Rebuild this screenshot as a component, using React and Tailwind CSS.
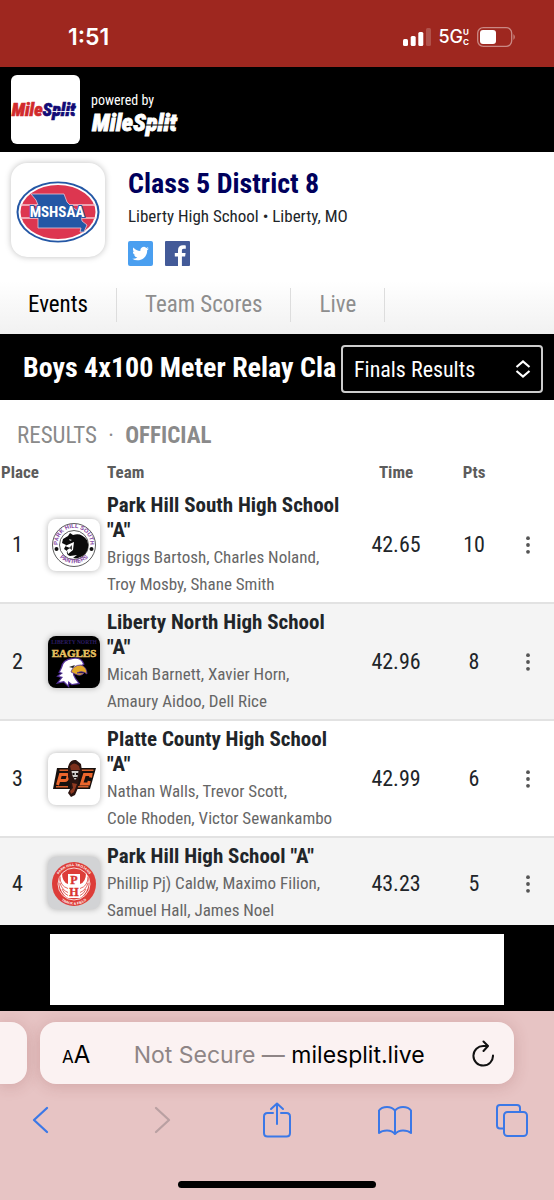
const ROWS = [
  {
    place: 1,
    team: 'Park Hill South High School "A"',
    runners: ['Briggs Bartosh, Charles Noland,', 'Troy Mosby, Shane Smith'],
    time: '42.65',
    pts: 10,
    Logo: PanthersLogo,
    tile: 'bg-white',
  },
  {
    place: 2,
    team: 'Liberty North High School "A"',
    runners: ['Micah Barnett, Xavier Horn,', 'Amaury Aidoo, Dell Rice'],
    time: '42.96',
    pts: 8,
    Logo: EaglesLogo,
    tile: 'bg-black',
  },
  {
    place: 3,
    team: 'Platte County High School "A"',
    runners: ['Nathan Walls, Trevor Scott,', 'Cole Rhoden, Victor Sewankambo'],
    time: '42.99',
    pts: 6,
    Logo: PiratesLogo,
    tile: 'bg-white',
  },
  {
    place: 4,
    team: 'Park Hill High School "A"',
    runners: ['Phillip Pj) Caldw, Maximo Filion,', 'Samuel Hall, James Noel'],
    time: '43.23',
    pts: 5,
    Logo: TrojansLogo,
    tile: 'bg-[#d2d3d5]',
  },
]

function PanthersLogo() {
  return (
    <svg viewBox="0 0 52 52" className="w-full h-full" aria-hidden="true">
      <defs>
        <path id="panther-top" d="M10.3 29 A16.2 16.2 0 1 1 41.7 29" />
        <path id="panther-bottom" d="M6.5 30 A20.5 20.5 0 0 0 45.5 30" />
      </defs>
      <circle cx="26" cy="26" r="21.5" fill="#fff" stroke="#333" strokeWidth="0.8" />
      <circle cx="26" cy="26" r="14.5" fill="none" stroke="#333" strokeWidth="0.8" />
      <g fill="#8040a0" fontSize="5.8" fontWeight="700" textAnchor="middle" fontFamily="Liberation Sans, sans-serif">
        <text>
          <textPath href="#panther-top" startOffset="50%">PARK HILL SOUTH</textPath>
        </text>
        <text>
          <textPath href="#panther-bottom" startOffset="50%">PANTHERS</textPath>
        </text>
      </g>
      <circle cx="8.5" cy="30" r="2" fill="#111" />
      <circle cx="43.5" cy="30" r="2" fill="#111" />
      <path
        d="M15 20 L20 17 L22 14 L25 16 Q33 13 39 21 Q42 29 37 35 Q32 40 25 39 L29 36 L22 37 Q18 36 19 32 L16 30 L18 26 L14 24 Z"
        fill="#0b0b0b"
      />
      <path d="M17 27 L26 23 L25 31 L20 35 L19 31 L22 29 Z" fill="#fff" />
      <path d="M21 29 L24 26 L24 31 Z" fill="#444" />
      <path d="M21 20 l3 1 -2 1 z" fill="#ccc" />
    </svg>
  )
}

function EaglesLogo() {
  return (
    <svg viewBox="0 0 52 52" className="w-full h-full" aria-hidden="true">
      <text x="26" y="8" fill="#2c1d63" fontSize="5.5" fontWeight="700" textAnchor="middle" fontFamily="Liberation Serif, serif">
        LIBERTY NORTH
      </text>
      <text
        x="26"
        y="21"
        fill="#e8c060"
        stroke="#e8c060"
        strokeWidth="0.5"
        fontSize="11"
        fontWeight="700"
        textAnchor="middle"
        fontFamily="Liberation Serif, serif"
      >
        EAGLES
      </text>
      <path
        d="M14 32 Q15 24 25 23 Q33 22 35 28 L30 31 L25 34 L25 39 L27 43 L30 47 L24 48 L20 45 L20 49 L16 45 L11 46 L15 41 L11 40 L15 37 L12 36 Z"
        fill="#fff"
        stroke="#53309a"
        strokeWidth="2.5"
        paintOrder="stroke"
      />
      <path d="M23 36 Q25 29 33 29 Q39 31 39 38 Q34 34 29 37 L36 37 Q33 41 27 38 Z" fill="#e3a929" stroke="#53309a" strokeWidth="0.8" />
      <path d="M21 31 L27 29 L25 32 Z" fill="#222" />
    </svg>
  )
}

function PiratesLogo() {
  return (
    <svg viewBox="0 0 52 52" className="w-full h-full" aria-hidden="true">
      <path d="M9 15 H48 L42 36 H5 Z" fill="#17100e" />
      <path d="M11.5 17.2 H20 M31 17.2 H45.5 M8 33.8 H20 M29 33.8 H40.5" stroke="#d65f2b" strokeWidth="1.4" />
      <g fill="none" stroke="#ec662c" strokeWidth="3">
        <path d="M9.5 32 L12.5 21.5 H19 Q20.5 21.5 20 23.5 L19.5 25.5 Q19 27.5 17 27.5 H11" />
        <path d="M42.5 24.5 L43 21.5 H36.5 L33.5 31 H40.5 L41.2 28" />
      </g>
      <path d="M20 14 Q22 6 28 7 L33 11 L34 18 L31 25 L30 35 L27 42 L23 44 L20 40 L23 34 L20 24 Z" fill="#2a1410" />
      <path d="M22 13 Q26 8 31 13 L32 17 L23 17 Z" fill="#7d301c" />
      <path d="M23.5 18 H30.5 L29.5 24 L27 27 L24.5 23 Z" fill="#d2cfcd" />
      <path d="M24.5 20 h2 v2 h-2 z M28 20 h2 v2 h-2 z M25.5 24 h3.5 v1 h-3.5 z" fill="#17100e" />
      <path d="M24 30 L29 31 L26 39 L23 41 L22 38 L25 35 Z" fill="#8f3920" />
    </svg>
  )
}

function TrojansLogo() {
  return (
    <svg viewBox="0 0 52 52" className="w-full h-full" aria-hidden="true">
      <defs>
        <path id="trojan-top" d="M8.5 30 A17.8 17.8 0 1 1 43.5 30" />
        <path id="trojan-bottom" d="M6 32 A20.6 20.6 0 0 0 46 32" />
      </defs>
      <circle cx="26" cy="27" r="22" fill="#dd3d39" />
      <circle cx="26" cy="27" r="16" fill="none" stroke="#fff" strokeWidth="0.8" />
      <g fill="#fff" fontSize="3.5" fontWeight="700" textAnchor="middle" fontFamily="Liberation Sans, sans-serif">
        <text>
          <textPath href="#trojan-top" startOffset="50%">PARK HILL TROJANS</textPath>
        </text>
        <text>
          <textPath href="#trojan-bottom" startOffset="50%">TRACK &amp; FIELD</textPath>
        </text>
      </g>
      <path
        d="M14 16 Q14 25 20 27 V17 H32 V27 Q38 25 38 16 Q43 25 39 33 Q37 38 32 41 H20 Q15 38 13 33 Q9 25 14 16 Z"
        fill="#fff"
      />
      <path
        d="M12 20 Q12 29 20 31.5 M12 26 Q14 33 20 35.5 M14 32 Q16 37 20 38.5 M40 20 Q40 29 32 31.5 M40 26 Q38 33 32 35.5 M38 32 Q36 37 32 38.5"
        fill="none"
        stroke="#dd3d39"
        strokeWidth="0.8"
      />
      <g
        fill="#d93330"
        stroke="#d93330"
        strokeWidth="0.4"
        fontSize="12"
        fontWeight="700"
        textAnchor="middle"
        fontFamily="Liberation Serif, serif"
      >
        <text x="26" y="27">P</text>
        <text x="26" y="39">H</text>
      </g>
    </svg>
  )
}

function MshsaaLogo() {
  return (
    <svg viewBox="0 0 94 94" className="w-full h-full" aria-label="MSHSAA">
      <ellipse cx="47" cy="49" rx="41.5" ry="30.5" fill="#2457a5" />
      <ellipse cx="47" cy="49" rx="39.5" ry="28.8" fill="#fff" />
      <ellipse cx="47" cy="49" rx="37.5" ry="27" fill="#dd3650" />
      <path d="M9.5 42 H84.5 M9.5 55 H84.5" stroke="#f3c6cf" strokeWidth="1.5" />
      <path
        d="M20 31 H53 L56 39 L61 44 L70 50 L71 58 L76 62 L73 69 L69 69 L70 65 H27 V42 L25 37 Z"
        fill="#2457a5"
        stroke="#e7c7d5"
        strokeWidth="0.8"
      />
      <text
        x="46"
        y="54"
        fill="#fff"
        stroke="#2457a5"
        strokeWidth="2"
        paintOrder="stroke"
        fontSize="15"
        fontWeight="700"
        textAnchor="middle"
        fontFamily="Liberation Sans Narrow, Roboto Condensed, sans-serif"
      >
        MSHSAA
      </text>
    </svg>
  )
}

// Wordmark with the thin cut that runs through "Split"
function MileSplitMark({ className, mile, split, cut }) {
  return (
    <svg viewBox="0 0 92 30" className={className} role="img" aria-label="MileSplit">
      <text
        x="1"
        y="22.5"
        fontSize="24"
        fontWeight="900"
        fontStyle="italic"
        strokeWidth="0.8"
        fontFamily="Roboto Condensed, Liberation Sans Narrow, sans-serif"
      >
        <tspan fill={mile} stroke={mile}>Mile</tspan>
        <tspan fill={split} stroke={split}>Split</tspan>
      </text>
      <path d="M54 17 H90" stroke={cut} strokeWidth="1.2" />
    </svg>
  )
}

function StatusBar() {
  return (
    <div className="flex items-center justify-between h-[67px] pt-[7px] pl-[68px] pr-[38px] bg-[#9e271f] text-white font-['Inter',sans-serif]">
      <span className="text-[23px] leading-7 font-semibold">1:51</span>
      <div className="flex items-center">
        <svg viewBox="0 0 28 18" className="w-7 h-[18px]" fill="#fff" aria-hidden="true">
          <rect x="0" y="11" width="5" height="7" rx="1.5" />
          <rect x="7.7" y="8" width="5" height="10" rx="1.5" />
          <rect x="15.3" y="4" width="5" height="14" rx="1.5" />
          <rect x="23" y="0" width="5" height="18" rx="1.5" opacity="0.2" />
        </svg>
        <span className="ml-[7px] text-lg leading-6 font-medium">5G</span>
        <span className="flex flex-col text-[8px] leading-[10px] font-bold">
          <span>U</span>
          <span>C</span>
        </span>
        <svg viewBox="0 0 39 20" className="w-[39px] h-5 ml-2" aria-hidden="true">
          <rect x="0.7" y="0.7" width="34" height="18.6" rx="5.5" fill="none" stroke="#fff" strokeOpacity="0.45" strokeWidth="1.3" />
          <rect x="3" y="3" width="16" height="14" rx="3" fill="#fff" />
          <path d="M36.5 7 q2.5 3 0 6 z" fill="#fff" fillOpacity="0.5" />
        </svg>
      </div>
    </div>
  )
}

function BrandBar() {
  return (
    <header className="flex items-center px-[11px] py-2 bg-black text-white">
      <div className="flex items-center justify-center w-[69px] h-[69px] rounded-md bg-white">
        <MileSplitMark className="w-[69px] h-6" mile="#d12a2c" split="#120b76" cut="#fff" />
      </div>
      <div className="ml-[11px] pt-2.5">
        <div className="text-sm leading-4">powered by</div>
        <MileSplitMark className="block w-[92px] h-[30px]" mile="#fff" split="#fff" cut="#000" />
      </div>
    </header>
  )
}

function MeetInfo() {
  return (
    <section className="flex px-[11px] pt-[11px] pb-[15px]">
      <div className="w-[94px] h-[94px] shrink-0 rounded-2xl bg-white shadow-[0_0_6px_rgba(0,0,0,0.25)]">
        <MshsaaLogo />
      </div>
      <div className="ml-[23px] pt-[3px]">
        <h1 className="text-[28px] leading-9 font-bold text-[#00005c]">Class 5 District 8</h1>
        <p className="text-[17px] leading-7 text-[#212529]">Liberty High School • Liberty, MO</p>
        <div className="flex gap-3 mt-[11px]">
          <a href="#twitter" aria-label="Twitter">
            <svg viewBox="0 0 25 25" className="w-[25px] h-[25px]">
              <rect width="25" height="25" rx="2" fill="#4a9ff0" />
              <path
                transform="translate(4.3 4.3) scale(0.69)"
                d="M23.95 4.57a10 10 0 0 1-2.82.77 4.96 4.96 0 0 0 2.16-2.72c-.95.55-2 .96-3.12 1.18a4.92 4.92 0 0 0-8.38 4.48C7.69 8.09 4.07 6.13 1.64 3.16a4.82 4.82 0 0 0-.67 2.48c0 1.71.87 3.21 2.19 4.1a4.9 4.9 0 0 1-2.23-.62v.06a4.92 4.92 0 0 0 3.95 4.83 5 5 0 0 1-2.21.08 4.94 4.94 0 0 0 4.6 3.42A9.87 9.87 0 0 1 0 19.54a13.99 13.99 0 0 0 7.56 2.21c9.05 0 14-7.5 14-13.99 0-.21 0-.42-.02-.63a9.94 9.94 0 0 0 2.41-2.56z"
                fill="#fff"
              />
            </svg>
          </a>
          <a href="#facebook" aria-label="Facebook">
            <svg viewBox="0 0 25 25" className="w-[25px] h-[25px]">
              <rect width="25" height="25" rx="1" fill="#435a98" />
              <path d="M13 25v-9.500H9.800V12H13V9.200C13 6 15 4.200 17.900 4.200c1.400 0 2.600.1 2.900.2v3.300h-2c-1.600 0-1.900.8-1.900 1.900V12h3.700l-.5 3.500h-3.200V25z" fill="#fff" />
            </svg>
          </a>
        </div>
      </div>
    </section>
  )
}

function Tabs() {
  return (
    <nav className="flex pt-[7px] pb-3 bg-linear-to-b from-white to-[#f1f1f1] text-[23px] leading-[34px]">
      <a href="#events" className="px-7 border-r border-[#dddddd] text-black">Events</a>
      <a href="#scores" className="px-7 border-r border-[#dddddd] text-[#8e8e8e]">Team Scores</a>
      <a href="#live" className="px-7 border-r border-[#dddddd] text-[#8e8e8e]">Live</a>
    </nav>
  )
}

function EventBar() {
  return (
    <div className="flex items-center h-[66px] pt-1 pl-[23px] pr-[11px] bg-black text-white">
      <h2 className="flex-1 min-w-0 overflow-hidden whitespace-nowrap pb-0.5 text-[28px] leading-9 font-bold">
        Boys 4x100 Meter Relay Cla
      </h2>
      <div className="relative w-[202px] shrink-0">
        <select
          aria-label="Round"
          className="block w-full h-12 pl-[11px] pr-10 appearance-none rounded border-2 border-[#cccccc] bg-black text-[22px]"
        >
          <option>Finals Results</option>
        </select>
        <svg
          viewBox="0 0 16 20"
          className="absolute right-3 top-3.5 w-4 h-5 pointer-events-none"
          fill="none"
          stroke="#fff"
          strokeWidth="2.2"
          aria-hidden="true"
        >
          <path d="M1.5 8 L8 2.5 L14.5 8 M1.5 12 L8 17.5 L14.5 12" />
        </svg>
      </div>
    </div>
  )
}

function ResultRow({ row }) {
  const { Logo } = row
  return (
    <tr className="border-b-2 border-[#e2e2e2] even:bg-[#f4f4f4] last:border-b-0">
      <td className="text-center text-[22px]">{row.place}</td>
      <td className="pl-[13px]">
        <div className={`w-[52px] h-[52px] overflow-hidden rounded-lg shadow-[0_0_6px_rgba(0,0,0,0.3)] ${row.tile}`}>
          <Logo />
        </div>
      </td>
      <td className="pt-1.5 pb-1">
        <div className="mb-px text-[21px] leading-[25px] font-bold">{row.team}</div>
        {row.runners.map((line) => (
          <div key={line} className="text-[17px] leading-[27px] text-[#666666] whitespace-nowrap">
            {line}
          </div>
        ))}
      </td>
      <td className="text-center text-[22px]">{row.time}</td>
      <td className="text-center text-[22px]">{row.pts}</td>
      <td className="pr-1 text-center">
        <button type="button" aria-label="More" className="align-middle">
          <svg viewBox="0 0 6 18" className="w-1.5 h-[18px]" fill="#555">
            <circle cx="3" cy="2.2" r="1.9" />
            <circle cx="3" cy="9" r="1.9" />
            <circle cx="3" cy="15.8" r="1.9" />
          </svg>
        </button>
      </td>
    </tr>
  )
}

function Results() {
  return (
    <main>
      <h3 className="pt-5 px-[17px] text-[23px] leading-8 text-[#8a8a8a]">
        RESULTS <span className="px-1.5">·</span> <b className="font-bold">OFFICIAL</b>
      </h3>
      <table className="w-full table-fixed border-collapse text-[#212529]">
        <colgroup>
          <col className="w-[35px]" />
          <col className="w-[72px]" />
          <col />
          <col className="w-[92px]" />
          <col className="w-16" />
          <col className="w-12" />
        </colgroup>
        <thead className="text-[17px] leading-7 text-[#5c5c5c]">
          <tr>
            <th colSpan={2} className="pt-1.5 pb-px pl-px text-left">Place</th>
            <th className="pt-1.5 pb-px text-left">Team</th>
            <th className="pt-1.5 pb-px">Time</th>
            <th className="pt-1.5 pb-px">Pts</th>
            <th></th>
          </tr>
        </thead>
        <tbody>
          {ROWS.map((row) => (
            <ResultRow key={row.place} row={row} />
          ))}
        </tbody>
      </table>
    </main>
  )
}

function SafariBar() {
  return (
    <footer className="pt-[11px] pb-3 bg-[#e7c4c4] overflow-hidden font-['Inter',sans-serif]">
      <div className="flex gap-[13px] pr-10">
        <div className="w-[27px] h-[62px] rounded-r-2xl bg-[#fbf2f2] shadow-[0_2px_16px_rgba(120,40,40,0.2)]" />
        <div className="flex flex-1 items-center justify-between h-[62px] pl-[22px] pr-5 rounded-2xl bg-[#fbf2f2] text-black shadow-[0_2px_16px_rgba(120,40,40,0.2)]">
          <button type="button" aria-label="Page settings" className="pt-1 leading-7">
            <span className="text-[17px]">A</span>
            <span className="text-2xl">A</span>
          </button>
          <div className="pt-1 pr-1 whitespace-nowrap text-[23px] leading-8">
            <span className="text-[#8e8586]">Not Secure — </span>milesplit.live
          </div>
          <button type="button" aria-label="Reload">
            <svg viewBox="0 0 22 27" className="w-[22px] h-[27px]" fill="none" stroke="#111" strokeWidth="2" strokeLinecap="round" strokeLinejoin="round">
              <path d="M15.5 6 H11.5 A9.8 9.8 0 1 0 21 15.5 M11.5 1.5 L16 6 L11.5 11" />
            </svg>
          </button>
        </div>
      </div>
      <div className="flex items-center justify-between pt-[18px] px-6 text-[#3b78e7]">
        <button type="button" aria-label="Back">
          <svg viewBox="0 0 36 36" className="w-9 h-9" fill="none" stroke="currentColor" strokeWidth="2.3" strokeLinecap="round" strokeLinejoin="round">
            <path d="M23 6 L10 18 L23 30" />
          </svg>
        </button>
        <button type="button" aria-label="Forward" className="text-[#b9a0a2]">
          <svg viewBox="0 0 36 36" className="w-9 h-9" fill="none" stroke="currentColor" strokeWidth="2.3" strokeLinecap="round" strokeLinejoin="round">
            <path d="M14 6 L27 18 L14 30" />
          </svg>
        </button>
        <button type="button" aria-label="Share">
          <svg viewBox="0 0 36 36" className="w-9 h-9" fill="none" stroke="currentColor" strokeWidth="2" strokeLinecap="round" strokeLinejoin="round">
            <path d="M14 11 H8.5 Q5 11 5 14.5 V31 Q5 34.5 8.5 34.5 H27.5 Q31 34.5 31 31 V14.5 Q31 11 27.5 11 H22 M18 22 V1.5 M12 7 L18 1.5 L24 7" />
          </svg>
        </button>
        <button type="button" aria-label="Bookmarks">
          <svg viewBox="0 0 36 36" className="w-9 h-9" fill="none" stroke="currentColor" strokeWidth="2" strokeLinecap="round" strokeLinejoin="round">
            <path d="M18 8.5 Q15 5 10 5 Q4.5 5 2 8.5 V31 Q5 28.5 10 28.5 Q15 28.5 18 32 Q21 28.5 26 28.5 Q31 28.5 34 31 V8.5 Q31.5 5 26 5 Q21 5 18 8.5 V32" />
          </svg>
        </button>
        <button type="button" aria-label="Tabs">
          <svg viewBox="0 0 36 36" className="w-9 h-9" fill="none" stroke="currentColor" strokeWidth="2" strokeLinejoin="round">
            <path d="M10 26.5 H6 Q3 26.5 3 23.5 V6 Q3 3 6 3 H23 Q26 3 26 6 V10" />
            <rect x="10" y="10" width="23" height="24" rx="3.5" />
          </svg>
        </button>
      </div>
      <div className="mx-auto mt-[43px] w-[198px] h-[7px] rounded-full bg-black" />
    </footer>
  )
}

export default function App() {
  return (
    <div className="w-full bg-white font-['Roboto_Condensed','Liberation_Sans_Narrow','Roboto',sans-serif]">
      <StatusBar />
      <BrandBar />
      <MeetInfo />
      <Tabs />
      <EventBar />
      <Results />
      {/* Ad slot, sits over the foot of the list */}
      <div className="relative -mt-[3px] pt-[9px] pb-[6px] px-[50px] bg-black">
        <div className="h-[71px] bg-white" />
      </div>
      <SafariBar />
    </div>
  )
}
